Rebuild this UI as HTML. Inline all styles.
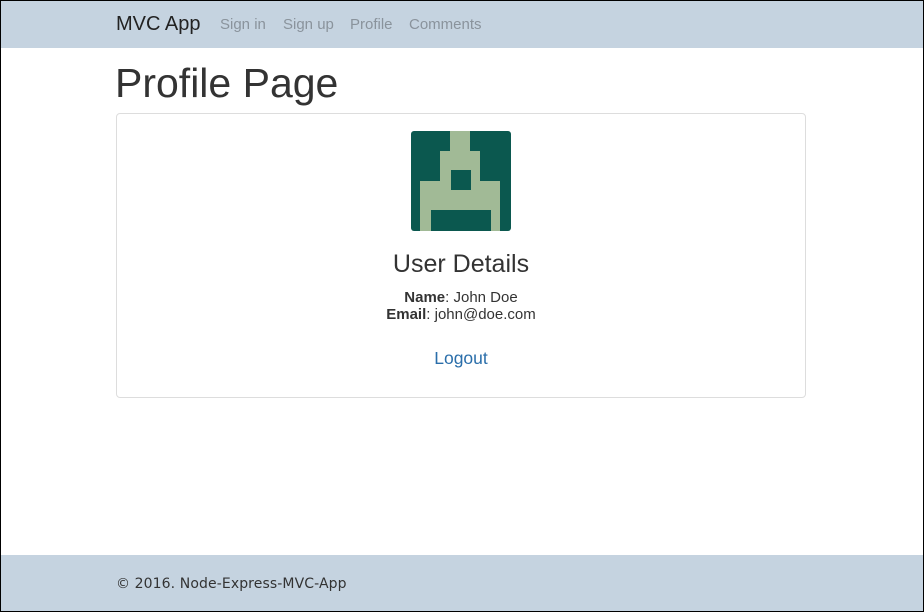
<!DOCTYPE html>
<html><head><meta charset="utf-8"><style>
*{margin:0;padding:0;box-sizing:border-box}
body{width:924px;height:611px;position:relative;background:#fff;font-family:"Liberation Sans",sans-serif;color:#333;overflow:hidden;border:1px solid #000}
.nav{position:absolute;left:-1px;top:-1px;width:924px;height:48px;background:#c5d3e0;border:1px solid #000;border-bottom:none}
.nav span{position:absolute;top:15px;font-size:15px;color:#8a939c}
.brand{position:absolute;left:115px;top:12px;font-size:20px;color:#222}
h1{position:absolute;left:114px;top:59px;font-size:41px;font-weight:normal;color:#333}
.card{position:absolute;left:115px;top:112px;width:690px;height:285px;border:1px solid #ddd;border-radius:4px}
.c{position:absolute;left:115px;width:690px;text-align:center}
.foot{position:absolute;left:-1px;top:554px;width:924px;height:57px;background:#c5d3e0;border:1px solid #000;border-top:none}
.foot span{position:absolute;left:115px;top:21px;font-size:14px;letter-spacing:0.1px;color:#333;font-family:"DejaVu Sans",sans-serif}
</style></head><body>
<div class="nav"><div class="brand">MVC App</div>
<span style="left:219px">Sign in</span><span style="left:282px">Sign up</span><span style="left:349px">Profile</span><span style="left:408px">Comments</span></div>
<h1>Profile Page</h1>
<div class="card"></div>
<svg style="position:absolute;left:410px;top:130px" width="100" height="100" viewBox="411 131 100 100">
<rect x="411" y="131" width="100" height="100" rx="3" fill="#0b584f"/>
<path fill="#a1ba96" d="M450 131h20v20h10v30h20v50h-80v-50h20v-30h10z"/>
<rect x="451" y="170" width="20" height="20" fill="#0b584f"/>
<rect x="431" y="210" width="60" height="21" fill="#0b584f"/>
</svg>
<div class="c" style="top:249px;font-size:25px;color:#333">User Details</div>
<div class="c" style="top:288px;font-size:15px;line-height:17px"><b>Name</b>: John Doe<br><b>Email</b>: john@doe.com</div>
<div class="c" style="top:347px;font-size:17.5px;color:#2a6eaa">Logout</div>
<div class="foot"><span>© 2016. Node-Express-MVC-App</span></div>
</body></html>
